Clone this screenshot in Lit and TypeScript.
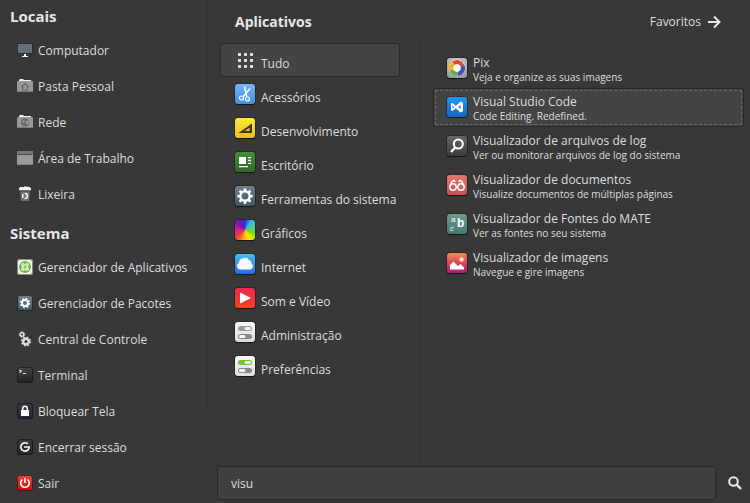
import { LitElement, html, svg, css } from "lit";
import { customElement, property, state } from "lit/decorators.js";
import { classMap } from "lit/directives/class-map.js";

const gearPath =
  "M8.9 2.5h2.2l.4 2.1 1.4.6 1.8-1.2 1.5 1.5-1.2 1.8.6 1.4 2.1.4v2.2l-2.1.4-.6 1.4 1.2 1.8-1.5 1.5-1.8-1.2-1.4.6-.4 2.1H8.9l-.4-2.1-1.4-.6-1.8 1.2-1.5-1.5L5 13.100l-.6-1.400-2.100-.4V9.100l2.100-.4L5 7.300 3.800 5.500 5.300 4l1.800 1.200 1.400-.6zM10 6.600a3.500 3.500 0 1 0 0 7 3.500 3.500 0 0 0 0-7z";

const folder = (glyph: unknown) => svg`
  <path d="M2 3V2l1-1h3l1 1h7v2H2z" fill="#f4f4f4"/>
  <path d="M0 14V4q0-1 1-1h14q1 0 1 1v10z" fill="#999"/>
  <path d="M2 2.500h12" stroke="#f4f4f4"/>
  <path d="M0 13.500h16" stroke="#7c7c7c"/>
  ${glyph}`;

const toggles = (on: string) => svg`
  <rect x="3" y="4" width="14" height="5" rx="2.500" fill="${on}"/>
  <rect x="9.500" y="5" width="6.500" height="3" rx="1.500" fill="#f4f4f4"/>
  <rect x="3" y="12" width="14" height="5" rx="2.500" fill="#888"/>
  <rect x="4" y="13" width="6.500" height="3" rx="1.500" fill="#f4f4f4"/>`;

const glyphs: Record<string, unknown> = {
  computer: svg`
    <rect x="0" y="1" width="16" height="11" fill="#2b2d31"/>
    <rect x="1" y="2" width="14" height="9" fill="#646d7c"/>
    <path d="M7 12h2v2h2v1H5v-1h2z" fill="#fff"/>`,
  home: folder(svg`<path d="M4.300 9 8 5.500 11.700 9M5.500 8.500V12h5V8.500" fill="none" stroke="#666" stroke-width="1.200"/>`),
  network: folder(svg`
    <circle cx="8" cy="8.500" r="4" fill="#666"/>
    <path d="M5 7.500 7.500 5.500 7.500 8 6 9zM9 7l2-.5.7 2-1.700 2.500-1.500-1.500zM5.500 9.500l2 1-.5 1.300z" fill="#999"/>`),
  desktop: svg`
    <rect x="0" y="1" width="16" height="14" rx="1" fill="#999"/>
    <path d="M0 5V2q0-1 1-1h14q1 0 1 1v3z" fill="#777"/>
    <path d="M1 4.500h14" stroke="#4b4b4b"/>
    <path d="M0 14.500h16" stroke="#858585"/>`,
  trash: svg`
    <path d="M3 4h10l-1 11H4z" fill="#707070"/>
    <path d="M2 2 4 .800l2 .4L8 .300l2 .5L12 .800l2 1.200V4.300H2z" fill="#f0f0f0"/>
    <path d="M3 5h10" stroke="#444"/>
    <circle cx="8" cy="10" r="2.400" fill="none" stroke="#f4f4f4" stroke-width="1.500" stroke-dasharray="3.800 1.200"/>`,
  mint: svg`
    <circle cx="8" cy="8" r="6" fill="#6fb83c"/>
    <g fill="none" stroke="#fff" stroke-width="1.100">
      <rect x="4.800" y="4.800" width="2.300" height="2.300" rx=".8"/><rect x="8.900" y="4.800" width="2.300" height="2.300" rx=".8"/>
      <rect x="4.800" y="8.900" width="2.300" height="2.300" rx=".8"/><rect x="8.900" y="8.900" width="2.300" height="2.300" rx=".8"/>
    </g>`,
  packages: svg`
    <circle cx="8" cy="8" r="3" fill="none" stroke="#fff" stroke-width="2"/>
    <circle cx="8" cy="8" r="4.500" fill="none" stroke="#fff" stroke-width="1.500" stroke-dasharray="1.767 1.767"/>`,
  control: svg`
    <g fill="none" stroke="#ddd">
      <circle cx="5" cy="3.500" r="1.800" stroke-width="1.400"/>
      <circle cx="5" cy="3.500" r="2.800" stroke-width="1" stroke-dasharray="1.200 1"/>
      <circle cx="9" cy="10.500" r="2.800" stroke-width="2.400"/>
      <circle cx="9" cy="10.500" r="4.400" stroke-width="1.400" stroke-dasharray="1.800 1.655"/>
    </g>`,
  terminal: svg`<path d="M2.500 3l1.800 1.200-1.800 1.300M6 6.500h3" fill="none" stroke="#e8e8e8" stroke-width="1.100"/>`,
  lock: svg`
    <rect x="4" y="7" width="8" height="6" fill="#fff"/>
    <path d="M5.700 7.500V5.500a2.300 2.300 0 0 1 4.600 0v2" fill="none" stroke="#fff" stroke-width="1.500"/>`,
  logout: svg`<path d="M10.900 4.900a4.200 4.200 0 1 0 1.300 3.100M7 8h6" fill="none" stroke="#f0f0f0" stroke-width="1.700"/>`,
  power: svg`<path d="M5.400 4.600a4.300 4.300 0 1 0 5.200 0M8 3v5" fill="none" stroke="#fff" stroke-width="1.600"/>`,
  all: svg`<g fill="#e6e6e6">${[3, 9, 15].map((y) => [3, 9, 15].map((x) => svg`<rect x="${x}" y="${y}" width="3" height="3" rx=".7"/>`))}</g>`,
  scissors: svg`
    <path d="M9.500 2.500 11.800 13M15 4.500 8 13" stroke="#fff" stroke-width="1.500"/>
    <circle cx="6.500" cy="14" r="2" fill="none" stroke="#fff" stroke-width="1.200"/>
    <circle cx="12.500" cy="15" r="2" fill="none" stroke="#fff" stroke-width="1.200"/>`,
  ruler: svg`<path fill-rule="evenodd" d="M17 5.500V15H3.500zM14.500 9.800l-5 3.200h5z" fill="#3a362a"/>`,
  office: svg`<path d="M4 5h7v7H4zM13 5h3v1.300h-3zM13 7.800h3v1.300h-3zM13 10.700h3V12h-3zM4 14h9v1.300H4z" fill="#fff"/>`,
  gear: svg`<path fill-rule="evenodd" d="${gearPath}" fill="#fff"/>`,
  none: "",
  cloud: svg`<path d="M5 15.500A3.600 3.600 0 0 1 4 8.700 4 4 0 0 1 8 4.500a3.800 3.800 0 0 1 5.800 1.500A3.400 3.400 0 0 1 16.500 9.500a3.300 3.300 0 0 1-1 6z" fill="#f6f8fb"/>`,
  play: svg`<path d="M5 4.500 16 10 5 15.500z" fill="#fff"/>`,
  admin: toggles("#999"),
  prefs: toggles("#73c22f"),
  pix: svg`
    <circle cx="10" cy="10" r="8.400" fill="#fff"/>
    <g fill="none" stroke-width="4.200">
      <path d="M6.400 5.200A6 6 0 0 1 15.500 7.700" stroke="#dc4c33"/>
      <path d="M15.500 7.700A6 6 0 0 1 10.500 16" stroke="#3c55a8"/>
      <path d="M10.500 16A6 6 0 0 1 4.300 11.900" stroke="#6aab48"/>
      <path d="M4.300 11.900A6 6 0 0 1 6.400 5.200" stroke="#f0b429"/>
    </g>`,
  vscode: svg`<path fill-rule="evenodd" d="M13.500 4.500 16 5.700v8.600l-2.500 1.200-4.600-4.200L5.500 14 4 13.200V6.800L5.500 6l3.400 2.700zM13.500 8 11 10l2.500 2zM5.500 8.500v3L7.200 10z" fill="#fff"/>`,
  log: svg`
    <circle cx="11.300" cy="8" r="4.500" fill="#555" stroke="#fff" stroke-width="2"/>
    <path d="M8.300 11.500 4 16" stroke="#fff" stroke-width="2.400"/>`,
  glasses: svg`
    <g fill="none" stroke="#fff" stroke-width="1.400">
      <circle cx="6" cy="12" r="3.200"/><circle cx="14" cy="12" r="3.200"/>
      <path d="M9 12h2M3 11.500 5 6.500l2-1.200L8.300 7M17 11.500l-2-5-2-1.200L11.700 7"/>
    </g>`,
  fonts: svg`
    <g fill="#fff">
      <text x="4" y="8" class="glyph">a</text>
      <text x="3" y="17" class="glyph italic">c</text>
      <text x="10" y="13" class="glyph bold">b</text>
    </g>`,
  image: svg`
    <path d="M3 16.500V12l3.500-3.500L11 13l2.500-2 3.500 3.500v2z" fill="#fff"/>
    <circle cx="14.500" cy="6.500" r="2.200" fill="#ffe3d3"/>`,
};

interface Entry {
  label: string;
  icon: string;
  detail?: string;
}

const places: Entry[] = [
  { label: "Computador", icon: "computer" },
  { label: "Pasta Pessoal", icon: "home" },
  { label: "Rede", icon: "network" },
  { label: "Área de Trabalho", icon: "desktop" },
  { label: "Lixeira", icon: "trash" },
];

const system: Entry[] = [
  { label: "Gerenciador de Aplicativos", icon: "mint" },
  { label: "Gerenciador de Pacotes", icon: "packages" },
  { label: "Central de Controle", icon: "control" },
  { label: "Terminal", icon: "terminal" },
  { label: "Bloquear Tela", icon: "lock" },
  { label: "Encerrar sessão", icon: "logout" },
  { label: "Sair", icon: "power" },
];

const categories: Entry[] = [
  { label: "Tudo", icon: "all" },
  { label: "Acessórios", icon: "scissors" },
  { label: "Desenvolvimento", icon: "ruler" },
  { label: "Escritório", icon: "office" },
  { label: "Ferramentas do sistema", icon: "gear" },
  { label: "Gráficos", icon: "none" },
  { label: "Internet", icon: "cloud" },
  { label: "Som e Vídeo", icon: "play" },
  { label: "Administração", icon: "admin" },
  { label: "Preferências", icon: "prefs" },
];

const apps: Entry[] = [
  { label: "Pix", icon: "pix", detail: "Veja e organize as suas imagens" },
  { label: "Visual Studio Code", icon: "vscode", detail: "Code Editing. Redefined." },
  { label: "Visualizador de arquivos de log", icon: "log", detail: "Ver ou monitorar arquivos de log do sistema" },
  { label: "Visualizador de documentos", icon: "glasses", detail: "Visualize documentos de múltiplas páginas" },
  { label: "Visualizador de Fontes do MATE", icon: "fonts", detail: "Ver as fontes no seu sistema" },
  { label: "Visualizador de imagens", icon: "image", detail: "Navegue e gire imagens" },
];

const flat = new Set(["computer", "home", "network", "desktop", "trash", "control", "all"]);

@customElement("menu-icon")
class MenuIcon extends LitElement {
  @property() name = "";
  @property({ type: Number }) size = 16;

  static styles = css`
    :host { display: block; flex: none; }
    .box { display: block; }
    .s16 { width: 16px; height: 16px; }
    .s20 { width: 20px; height: 20px; }
    .tile { border-radius: 3px; box-shadow: 0 0 0 1px rgba(0, 0, 0, 0.25), 0 1px 1px rgba(0, 0, 0, 0.5); }
    .tile.s16 { box-shadow: inset 0 0 0 1px rgba(20, 18, 24, 0.7); }
    svg { display: block; width: 100%; height: 100%; }
    .glyph { font: 8px "Liberation Sans", sans-serif; }
    .italic { font-style: italic; }
    .bold { font-weight: 700; font-size: 12px; }
    .tile.mint { background: #f4f4f4; box-shadow: inset 0 0 0 1px #8a8a8a; }
    .packages, .gear { background: linear-gradient(#71818e, #405866); }
    .terminal { background: linear-gradient(#474747, #202020); }
    .lock, .logout { background: linear-gradient(#3d3a46, #26232e); }
    .power { background: linear-gradient(#f1403b, #c40d10); }
    .scissors { background: linear-gradient(#76b4f7, #3f8fe6); }
    .ruler { background: linear-gradient(#fcea3a, #e9bd17); }
    .office { background: linear-gradient(#43903a, #336a26); }
    .none { background: conic-gradient(#3a2bd0, #35b8e8 35deg, #43cf9d 70deg, #7be000 110deg, #f5e800 150deg, #f8c51b 180deg, #ee3a2f 230deg, #e0218a 265deg, #8d12a8 310deg, #3a2bd0); }
    .cloud { background: linear-gradient(#3ec2f0, #2d6bea); }
    .play { background: linear-gradient(#ef2850, #ee4322); }
    .admin, .prefs { background: linear-gradient(#f8f8f8, #dcdcdc); }
    .pix { background: linear-gradient(#bdbdbd, #999); }
    .vscode { background: linear-gradient(#2196f3, #1565c0); }
    .log { background: linear-gradient(#666, #3c3c3c); }
    .glasses { background: linear-gradient(#ea7474, #c65252); }
    .fonts { background: linear-gradient(#6b9a92, #467a71); }
    .image { background: linear-gradient(#f28c4a, #d9385c 60%, #a6217a); }
  `;

  render() {
    const classes = { box: true, s16: this.size === 16, s20: this.size === 20, tile: !flat.has(this.name), [this.name]: true };
    return html`<span class=${classMap(classes)}>
      <svg viewBox="0 0 ${this.size} ${this.size}" aria-hidden="true">${glyphs[this.name]}</svg>
    </span>`;
  }
}

@customElement("app-root")
class AppRoot extends LitElement {
  @state() private category = "Tudo";
  @state() private selected = "Visual Studio Code";
  @state() private query = "visu";

  static styles = css`
    :host {
      display: flex;
      box-sizing: border-box;
      min-height: 100vh;
      background: #383838;
      color: #dedede;
      font: 12px/16px "Open Sans", "Noto Sans", sans-serif;
    }
    * { box-sizing: border-box; }
    h2 { margin: 0; font-weight: 700; color: #e6e6e6; }
    ul { list-style: none; margin: 0; padding: 0; }
    button {
      display: flex;
      align-items: center;
      width: 100%;
      margin: 0;
      border: 1px solid transparent;
      border-radius: 3px;
      background: none;
      color: inherit;
      font: inherit;
      text-align: left;
      white-space: nowrap;
    }
    .sidebar { flex: none; width: 206px; }
    .sidebar h2 { padding-left: 10px; font-size: 15px; line-height: 32px; }
    .sidebar ul + h2 { padding-top: 5px; }
    .sidebar button { height: 36px; padding: 0 0 0 16px; gap: 5px; }
    .sidebar span { padding-top: 2px; }
    .grip {
      flex: none;
      width: 2px;
      margin-bottom: 92px;
      background: repeating-linear-gradient(#313131 0 2px, transparent 2px 4px);
    }
    .main { flex: 1; min-width: 0; display: flex; flex-direction: column; padding: 0 0 3px 9px; }
    .header { display: flex; justify-content: space-between; align-items: center; height: 43px; padding: 0 28px 0 18px; }
    .header h2 { font-size: 14px; line-height: 20px; }
    .header button { width: auto; padding: 0; gap: 6px; }
    .arrow { width: 14px; height: 14px; }
    .body { flex: 1; display: flex; padding-left: 3px; }
    .categories { flex: none; width: 180px; }
    .categories button { height: 34px; padding: 0 0 0 14px; gap: 6px; }
    .categories span { padding-top: 8px; }
    .chosen { background: #444; border-color: #292929; }
    .rule { flex: none; width: 1px; margin: 0 12px 4px 20px; background: #313131; }
    .apps { flex: 1; min-width: 0; padding: 6px 6px 0 0; }
    .apps button { height: 39px; padding: 0 0 2px 13px; gap: 6px; }
    .apps .chosen { outline: 1px dashed #686868; outline-offset: -3px; }
    .text { display: flex; flex-direction: column; padding-top: 3px; }
    .detail { font-size: 10px; line-height: 12px; }
    .search { display: flex; align-items: center; padding-right: 8px; gap: 12px; }
    .search input {
      flex: 1;
      min-width: 0;
      height: 34px;
      padding: 0 13px;
      border: 1px solid #292929;
      border-radius: 3px;
      background: #404040;
      color: inherit;
      font: inherit;
      outline: none;
    }
    .search button { flex: none; width: 14px; height: 16px; padding: 0; border: 0; }
    .lens { display: block; width: 14px; height: 14px; }
  `;

  private sideList(entries: Entry[]) {
    return html`<ul>
      ${entries.map((e) => html`<li><button type="button"><menu-icon name=${e.icon}></menu-icon><span>${e.label}</span></button></li>`)}
    </ul>`;
  }

  render() {
    return html`
      <nav class="sidebar" aria-label="Menu">
        <h2>Locais</h2>
        ${this.sideList(places)}
        <h2>Sistema</h2>
        ${this.sideList(system)}
      </nav>
      <div class="grip"></div>
      <main class="main">
        <header class="header">
          <h2>Aplicativos</h2>
          <button type="button">
            Favoritos
            <svg class="arrow" viewBox="0 0 14 14" aria-hidden="true">
              <path d="M1 7h11M7 1.500 12.500 7 7 12.500" fill="none" stroke="#e6e6e6" stroke-width="2"/>
            </svg>
          </button>
        </header>
        <div class="body">
          <ul class="categories">
            ${categories.map(
              (e) => html`<li>
                <button type="button" class=${classMap({ chosen: e.label === this.category })} @click=${() => (this.category = e.label)}>
                  <menu-icon name=${e.icon} size="20"></menu-icon><span>${e.label}</span>
                </button>
              </li>`
            )}
          </ul>
          <div class="rule"></div>
          <ul class="apps">
            ${apps.map(
              (e) => html`<li>
                <button type="button" class=${classMap({ chosen: e.label === this.selected })} @click=${() => (this.selected = e.label)}>
                  <menu-icon name=${e.icon} size="20"></menu-icon>
                  <span class="text"><span>${e.label}</span><span class="detail">${e.detail}</span></span>
                </button>
              </li>`
            )}
          </ul>
        </div>
        <form class="search" @submit=${(ev: Event) => ev.preventDefault()}>
          <input
            type="text"
            aria-label="Pesquisar"
            .value=${this.query}
            @input=${(ev: Event) => (this.query = (ev.target as HTMLInputElement).value)}
          />
          <button type="submit" aria-label="Pesquisar">
            <svg class="lens" viewBox="0 0 14 14" aria-hidden="true">
              <circle cx="5.500" cy="5.500" r="4.300" fill="none" stroke="#e6e6e6" stroke-width="2"/>
              <path d="M8.500 8.500 13 13" stroke="#e6e6e6" stroke-width="2.400"/>
            </svg>
          </button>
        </form>
      </main>
    `;
  }
}
